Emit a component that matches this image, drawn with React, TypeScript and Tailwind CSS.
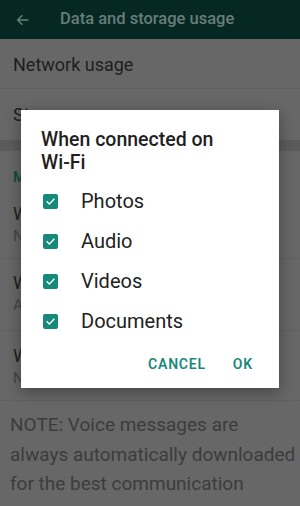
import React from "react";

function Check() {
  return (
    <span className="flex h-[15px] w-[15px] items-center justify-center rounded-[2px] bg-[#17897b]">
      <svg width="11" height="11" viewBox="0 0 24 24" fill="none">
        <path d="M4.5 12.5l5 5L19.5 7" stroke="#ffffff" strokeWidth="3" strokeLinecap="square" />
      </svg>
    </span>
  );
}

export default function App() {
  const items = ["Photos", "Audio", "Videos", "Documents"];
  return (
    <div
      className="relative h-[506px] w-[300px] overflow-hidden bg-[#676767]"
      style={{ fontFamily: "Roboto, 'Noto Sans', sans-serif" }}
    >
      {/* header */}
      <div className="flex h-[39px] items-center bg-[#052823]">
        <svg className="ml-[15px]" width="16" height="16" viewBox="0 0 24 24" fill="none">
          <path d="M20 12H5M11 5l-7 7 7 7" stroke="#687d78" strokeWidth="2.2" />
        </svg>
        <span className="ml-[29px] text-[16.5px] font-medium text-[#687d78]">Data and storage usage</span>
      </div>

      {/* list */}
      <div className="flex h-[49px] items-center pl-[13px] pt-[2px] text-[18px] text-[#1e1e1e]">Network usage</div>
      <div className="h-px bg-[#606060]" />
      <div className="flex h-[51px] items-center pl-[13px] text-[18px] text-[#1e1e1e]">Storage usage</div>
      <div className="h-[11px] bg-[#5b5b5b]" />
      <div className="h-[44px] pl-[13px] pt-[17px] text-[14px] font-medium leading-[18px] text-[#0d4a42]">
        Media auto-download
      </div>
      <div className="h-[63px] pl-[13px] pt-[8px]">
        <div className="text-[18px] leading-[22px] text-[#1e1e1e]">When using mobile data</div>
        <div className="text-[15px] leading-[22px] text-[#444]">No media</div>
      </div>
      <div className="h-px bg-[#606060]" />
      <div className="h-[71px] pl-[13px] pt-[13px]">
        <div className="text-[18px] leading-[22px] text-[#1e1e1e]">When connected on Wi-Fi</div>
        <div className="text-[15px] leading-[22px] text-[#444]">All media</div>
      </div>
      <div className="h-px bg-[#606060]" />
      <div className="h-[69px] pl-[13px] pt-[14px]">
        <div className="text-[18px] leading-[22px] text-[#1e1e1e]">When roaming</div>
        <div className="text-[15px] leading-[22px] text-[#444]">No media</div>
      </div>
      <div className="h-px bg-[#606060]" />
      <div className="whitespace-nowrap pl-[10px] pt-[9px] text-[19px] leading-[29.5px] text-[#3c3c3c]">
        NOTE: Voice messages are
        <br />
        always automatically downloaded
        <br />
        for the best communication
        <br />
        experience.
      </div>

      {/* dialog */}
      <div className="absolute left-[21px] top-[110px] flex h-[278px] w-[258px] flex-col bg-white shadow-[0_4px_14px_rgba(0,0,0,0.35)]">
        <div className="pl-[20px] pr-[20px] pt-[18px] text-[19.5px] font-medium leading-[23px] text-[#1f1f1f]">
          When connected on
          <br />
          Wi-Fi
        </div>
        <div className="mt-[7px] flex flex-col">
          {items.map((t) => (
            <div key={t} className="flex h-[40px] items-center">
              <span className="ml-[22px]">
                <Check />
              </span>
              <span className="ml-[23px] text-[20px] text-[#222]">{t}</span>
            </div>
          ))}
        </div>
        <div className="flex flex-1 items-center justify-end pr-[26px]">
          <span className="text-[14px] font-semibold tracking-[0.8px] text-[#17897b]">CANCEL</span>
          <span className="ml-[27px] text-[14px] font-semibold tracking-[0.8px] text-[#17897b]">OK</span>
        </div>
      </div>
    </div>
  );
}
